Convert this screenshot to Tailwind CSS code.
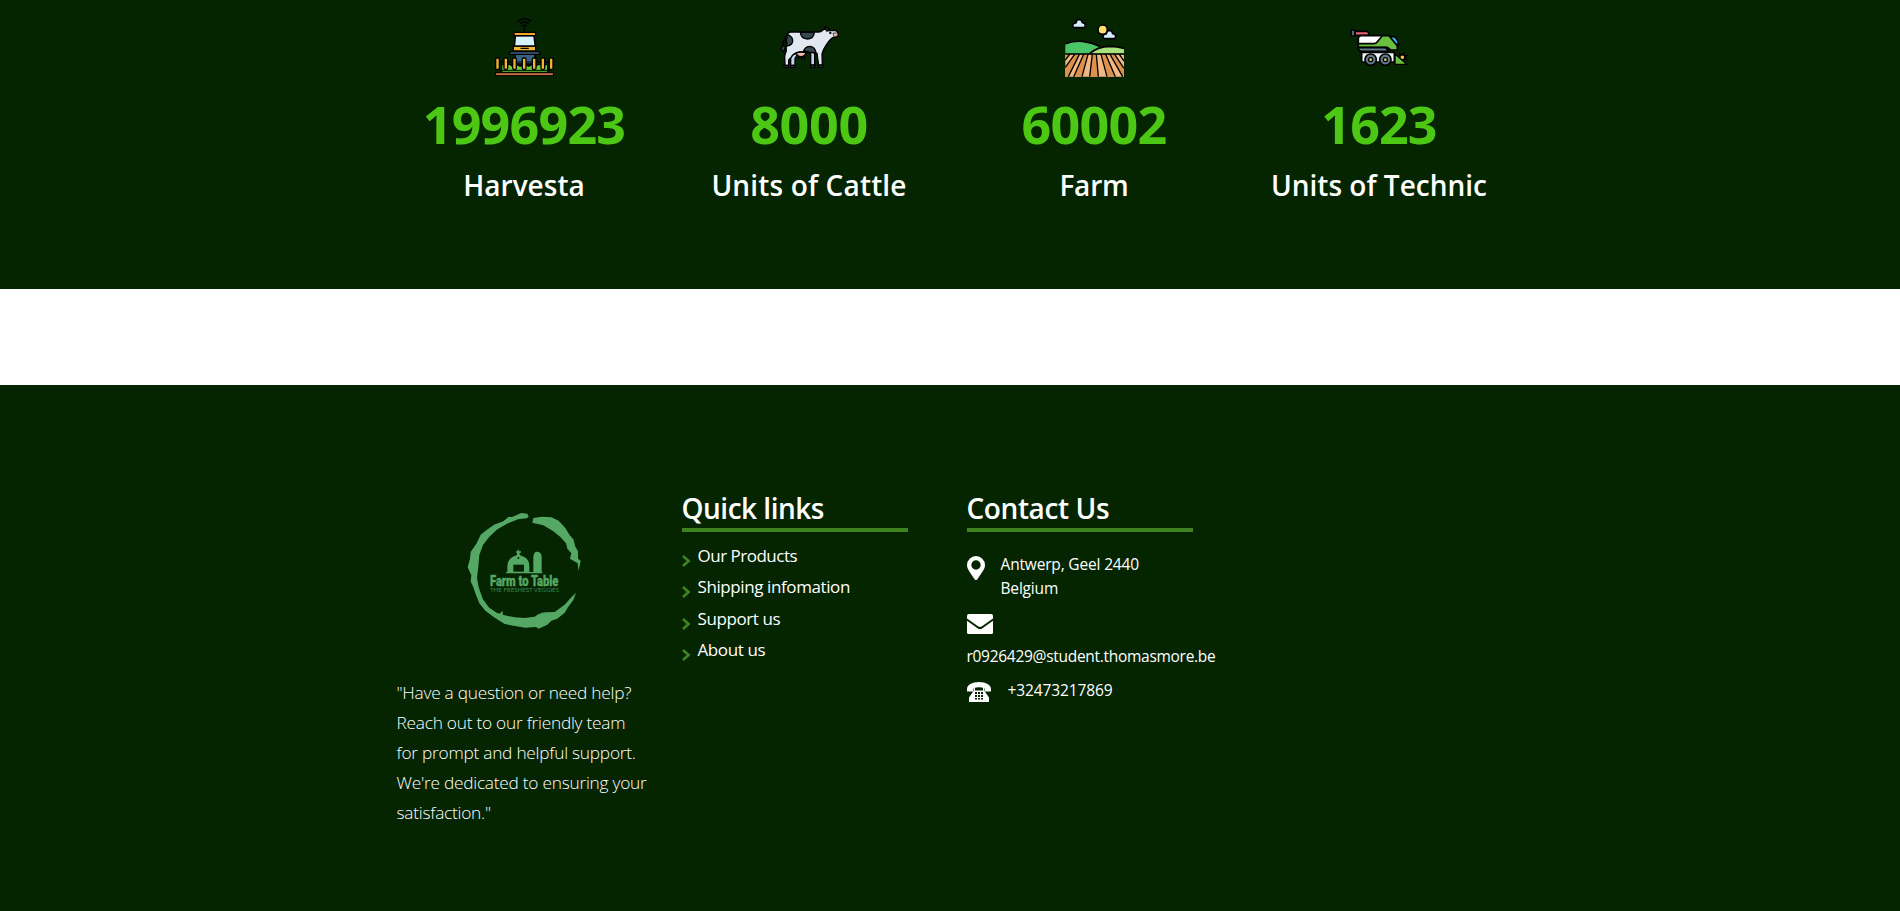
<!DOCTYPE html>
<html lang="en">

<head>
    <meta charset="UTF-8">
    <meta name="viewport" content="width=device-width, initial-scale=1.0">
    <title>Farm to Table</title>
    <script src="https://cdn.jsdelivr.net/npm/@tailwindcss/browser@4"></script>
</head>

<body class="bg-white font-['Open_Sans','Noto_Sans',sans-serif] text-white overflow-hidden">
    <!-- Counters -->
    <section class="h-[289px] bg-[#042500] pt-[17px]">
        <div class="ml-[381.5px] w-[1140px] grid grid-cols-4 text-center">
            <div class="flex flex-col items-center">
                <svg class="w-[60px] h-[60px]" viewBox="27 21 180 180" stroke="#000" stroke-width="5" stroke-linejoin="round" stroke-linecap="round">
                    <g fill="none" stroke-width="5"><path d="M100 33q18-14 36 0M106 41q12-9 24 0M112 48q6-4 12 0M118 54v14"/></g>
                    <path fill="#3a6383" d="M90 132h60v30H90z"/>
                    <path fill="#3a6383" d="M76 125h86l4 8H72z" stroke-width="4"/>
                    <path fill="#f7b92b" d="M85 108h67v15H85z" stroke-width="4"/>
                    <path d="M108 115h22" stroke-width="4"/>
                    <path fill="#d5f3ff" d="M91 77h56l4 31H88z"/>
                    <path fill="#efaa2b" d="M87 67h65v10H87z" stroke-width="4"/>
                    <path stroke="none" d="M48 162h142v26H48z"/>
                    <path stroke="none" fill="#63cf3a" d="M52 164l11 7 10-7 9 7 10-7 14 7 12-7 14 7 10-7 10 7 10-7 12 7 12-7v21H52z"/>
                    <path d="M37 156h164M43 181h154" stroke-width="3"/>
                    <path fill="#c4703f" d="M33 188h172v9H33z" stroke-width="3"/>
                    <g fill="#f3b52f" stroke-width="4"><rect x="32" y="144" width="11" height="34" rx="3"/><rect x="57" y="144" width="11" height="34" rx="3"/><rect x="83" y="144" width="11" height="34" rx="3"/><rect x="112" y="144" width="11" height="34" rx="3"/><rect x="142" y="144" width="11" height="34" rx="3"/><rect x="168" y="144" width="11" height="34" rx="3"/><rect x="193" y="144" width="11" height="34" rx="3"/></g>
                </svg>
                <p class="mt-[17px] text-[52px] leading-[60px] font-bold tracking-[-0.8px] text-[#4cc714]">1996923</p>
                <h3 class="mt-[14px] text-[28px] leading-[34px] font-semibold">Harvesta</h3>
            </div>
            <div class="flex flex-col items-center">
                <svg class="w-[60px] h-[60px]" viewBox="27 21 180 180" stroke="#000" stroke-width="4" stroke-linejoin="round" stroke-linecap="round">
                    <path fill="none" d="M50 78q-12 12-10 30" stroke-width="5"/>
                    <path fill="#37474f" d="M37 106l9 5-5 15-8-7z"/>
                    <path fill="#bed6ed" d="M62 138v28h13v-20l8-14M122 128v38h12v-38"/>
                    <path fill="#e2e8f2" d="M62 66H145Q153 66 159 60L168 56L165 50L173 54L178 62H198Q206 66 204 76Q200 84 187 83Q173 95 161 118L156 132L157 166H146L141 130Q112 122 88 126Q68 130 64 142L56 150V166H45L44 138L49 122L48 96Q44 70 62 66z"/>
                    <path fill="#37474f" d="M91 67h42q-1 19-20 20-21-1-22-20zM54 74q15 7 14 19 0 12-17 15-4-24 3-34zM101 122q5-13 20-13 14 2 17 19-20 1-37-6z"/>
                    <path fill="#f5b7ae" d="M79 128q14-3 29 0-3 12-15 12-12-1-14-12z"/>
                    <path fill="#f5b7a5" d="M190 69h13q4 9-10 12z" stroke-width="2"/>
                    <path fill="none" d="M86 141v5M96 142v6M104 139v6"/>
                    <path fill="#37474f" d="M164 54l8-1 5 9-7 1zM42 166h13v6H42zM62 166h13v6H62zM122 165h12v7h-12zM146 165h13v7h-13z"/>
                    <circle cx="181" cy="69" r="1.5"/>
                </svg>
                <p class="mt-[17px] text-[52px] leading-[60px] font-bold tracking-[-0.3px] text-[#4cc714]">8000</p>
                <h3 class="mt-[14px] text-[28px] leading-[34px] font-semibold tracking-[0.15px]">Units of Cattle</h3>
            </div>
            <div class="flex flex-col items-center">
                <svg class="w-[60px] h-[60px]" viewBox="27 21 180 180" stroke="#000" stroke-width="5" stroke-linejoin="round">
                    <path fill="#d3efff" d="M58 53q-6-2-5-8 3-7 10-6 1-11 10-11 8 1 9 10 9 0 9 8 0 5-4 7z"/>
                    <circle cx="143" cy="59" r="14" fill="#ffe064"/>
                    <path fill="#d3efff" d="M149 86q-6-2-5-8 3-7 10-6 1-11 10-11 8 1 9 10 9 0 9 8 0 5-4 7z"/>
                    <path fill="#a9e27d" stroke="none" d="M104 131q26-21 61-22 22 0 42 7v15z"/>
                    <path fill="#4bc467" stroke="none" d="M31 103q50-20 102 9-16 6-29 19H31z"/>
                    <path fill="none" d="M31 101q24-9 51-7 28 3 53 15M104 131q22-21 61-22 22 0 42 6"/>
                    <path fill="#f2b883" stroke="none" d="M31 133h176v67H31z"/>
                    <path fill="#dd914e" stroke="none" d="M31 133h13l-13 17zM59 133h14L40 200h-9v-28zM86 133h13L81 200H56zM112 133h12l6 67h-26zM138 133h14l29 67h-25zM165 133h14l28 42v25h-4z"/>
                    <path fill="none" stroke-width="4" d="M31 132h176M44 133l-13 17M59 133l-28 39M73 133L40 200M86 133L56 200M99 133L81 200M112 133l-8 67M124 133l6 67M138 133l18 67M152 133l29 67M165 133l38 67M179 133l28 42M193 133l14 20"/>
                </svg>
                <p class="mt-[17px] text-[52px] leading-[60px] font-bold tracking-[-0.7px] text-[#4cc714]">60002</p>
                <h3 class="mt-[14px] text-[28px] leading-[34px] font-semibold tracking-[-0.2px]">Farm</h3>
            </div>
            <div class="flex flex-col items-center">
                <svg class="w-[60px] h-[60px]" viewBox="27 21 180 180" stroke="#000" stroke-width="5" stroke-linejoin="round" stroke-linecap="round">
                    <path fill="#e8606a" d="M45 64h38l6 12H45z"/>
                    <path fill="#607d8b" d="M34 60h10v18H34z"/>
                    <path fill="#2cb7dd" d="M151 80h12q11 8 13 23h-14z"/>
                    <path fill="#fff" d="M55 86q0-9 9-9h76l-22 25H55z"/>
                    <path fill="#6abf3f" d="M55 101h46q7 0 11-6l15-18h20l25 31v12h-20l-10-8H55z"/>
                    <path fill="#607d8b" d="M55 113h82l9 11H63q-8-2-8-11z"/>
                    <path fill="#f1f5fb" d="M65 127h98v29H65z"/>
                    <circle cx="92" cy="149" r="17" fill="#607d8b"/><circle cx="92" cy="149" r="6" fill="#f0c56c" stroke-width="4"/>
                    <circle cx="136" cy="149" r="17" fill="#607d8b"/><circle cx="136" cy="149" r="6" fill="#f0c56c" stroke-width="4"/>
                    <circle cx="187" cy="142" r="8" fill="#f4c33e"/>
                    <path fill="none" d="M180 134l-3-5M190 132l4-3M195 138l8-1M197 146l5 4" stroke-width="4"/>
                    <path fill="#6abf3f" d="M165 135q5 0 8 4l27 24h-35z" stroke-width="4"/>
                </svg>
                <p class="mt-[17px] text-[52px] leading-[60px] font-bold tracking-[-0.9px] text-[#4cc714]">1623</p>
                <h3 class="mt-[14px] text-[28px] leading-[34px] font-semibold">Units of Technic</h3>
            </div>
        </div>
    </section>

    <div class="h-24 bg-white"></div>

    <!-- Footer -->
    <footer class="h-[526px] bg-[#042500] pt-[106px]">
        <div class="ml-[381.5px] w-[1140px] grid grid-cols-4">
            <div class="px-[15px] pt-[9px]">
                <svg class="w-[140px] h-[140px] mx-auto" viewBox="-2 0 420 420" fill="#55a764">
                    <path d="M218 41L222 50L216 55L190 58L160 70L128 88L104 110L85 135L74 165L71 200L67 235L72 262L84 296L102 322L126 338L150 346L180 352L210 354L240 350L252 342L272 337L300 336L330 314L350 292L364 278L356 300L340 322L330 338L308 356L290 362L278 374L252 386L244 381L212 383L176 377L150 372L118 352L92 332L74 310L62 280L56 262L48 244L50 226L39 202L46 176L48 156L66 130L78 104L96 90L118 74L146 64L162 50L172 51L200 39z"/>
                    <path d="M233 68L236 54L262 50L290 52L312 62L332 84L344 104L356 118L362 140L370 154L370 176L378 182L372 212L369 190L356 182L346 176L350 160L338 146L334 130L318 112L296 94L266 76z"/>
                    <path d="M130 346l14-14v18zM258 348l6-12 7 12zM296 348l12-10-2 14zM50 248l10-12 10 14zM62 262l12 10-8-2z"/>
                    <path d="M155 216h3v-18q2-20 14-26l15-7v-7h-3v-4h5v-5h4v5h6v4h-4v7l15 7q14 8 14 26v18h12v-46q2-15 10-15 14 0 15 15v46h2v4H154z"/>
                    <path fill="#042500" d="M176 194h32v21h-32z"/><circle cx="191" cy="174" r="3" fill="#042500"/>
                    <text x="106" y="258" font-family="Roboto, sans-serif" font-weight="900" font-size="45" stroke="#55a764" stroke-width="1" textLength="326" lengthAdjust="spacingAndGlyphs" transform="translate(106 0) scale(.63 1) translate(-106 0)">Farm to Table</text>
                    <text x="106" y="277" font-family="Lato, sans-serif" font-size="18" textLength="207" lengthAdjust="spacingAndGlyphs" opacity=".75">THE FRESHEST VEGGIES</text>
                </svg>
                <p class="mt-[38px] text-[17.3px] leading-[30px] font-light tracking-[-0.25px] whitespace-nowrap">"Have a question or need help?<br>Reach out to our friendly team<br>for prompt and helpful support.<br>We're dedicated to ensuring your<br>satisfaction."</p>
            </div>
            <div class="px-[15px]">
                <h3 class="w-[226px] pb-[3px] border-b-4 border-[#3f8321] text-[28px] leading-[34px] font-semibold tracking-[-0.5px]">Quick links</h3>
                <ul class="mt-2 text-[17px] leading-[31.4px] tracking-[-0.4px]">
                    <li class="flex gap-2"><svg class="mt-[15px] w-2 h-3" viewBox="0 0 8 12" fill="none" stroke="#3f8321" stroke-width="2.6"><path d="M1 1l5.500 5L1 11"/></svg><a href="#" class="tracking-[-0.5px]">Our Products</a></li>
                    <li class="flex gap-2"><svg class="mt-[15px] w-2 h-3" viewBox="0 0 8 12" fill="none" stroke="#3f8321" stroke-width="2.6"><path d="M1 1l5.500 5L1 11"/></svg><a href="#">Shipping infomation</a></li>
                    <li class="flex gap-2"><svg class="mt-[15px] w-2 h-3" viewBox="0 0 8 12" fill="none" stroke="#3f8321" stroke-width="2.6"><path d="M1 1l5.500 5L1 11"/></svg><a href="#">Support us</a></li>
                    <li class="flex gap-2"><svg class="mt-[15px] w-2 h-3" viewBox="0 0 8 12" fill="none" stroke="#3f8321" stroke-width="2.6"><path d="M1 1l5.500 5L1 11"/></svg><a href="#">About us</a></li>
                </ul>
            </div>
            <div class="px-[15px]">
                <h3 class="w-[226px] pb-[3px] border-b-4 border-[#3f8321] text-[28px] leading-[34px] font-semibold tracking-[-0.4px]">Contact Us</h3>
                <div class="mt-5 flex gap-4 text-[15.5px] leading-6 tracking-[-0.17px]">
                    <svg class="mt-1 w-[18px] h-6" viewBox="0 0 18 24" fill="#fff"><path fill-rule="evenodd" d="M9 0a9 9 0 0 1 9 9c0 4-3 7.500-7.800 14.400q-1.200 1.200-2.400 0C3 16.500 0 13 0 9a9 9 0 0 1 9-9zm0 4.300a4.700 4.700 0 1 0 0 9.400 4.700 4.700 0 0 0 0-9.400z"/></svg>
                    <p>Antwerp, Geel 2440<br>Belgium</p>
                </div>
                <svg class="mt-[14px] w-[26px] h-5" viewBox="0 0 26 20" fill="#fff"><path d="M0 4.500V2q0-2 2-2h22q2 0 2 2v2.500L15 12.300q-2 1.400-4 0z"/><path d="M0 6.700l10.500 7.500q2.500 1.700 5 0L26 6.700V18.500q0 1.500-1.500 1.500h-23Q0 20 0 18.500z"/></svg>
                <p class="mt-[10px] text-[15.5px] leading-6 tracking-[-0.29px]">r0926429@student.thomasmore.be</p>
                <div class="mt-[10px] flex gap-[17px] text-[15.5px] leading-6 tracking-[-0.12px]">
                    <svg class="mt-1 w-6 h-5" viewBox="0 0 24 20" fill="#fff"><path d="M12 0c7 0 12 3 12 7v2.500h-6V6.500Q12 4 6 6.500v3H0V7c0-4 5-7 12-7z"/><path fill-rule="evenodd" d="M8 6v2.500h8V6h1.500v3L22 15.500V20H2v-4.500L6.500 9V6zM8 10v2h2v-2zm3 0v2h2v-2zm3 0v2h2v-2zM8 13v2h2v-2zm3 0v2h2v-2zm3 0v2h2v-2zM8 16v1.500h2V16zm3 0v1.500h2V16zm3 0v1.500h2V16z"/></svg>
                    <p>+32473217869</p>
                </div>
            </div>
        </div>
    </footer>
</body>

</html>
